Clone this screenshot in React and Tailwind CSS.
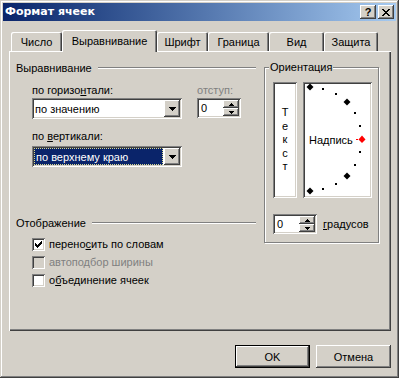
import React from 'react'

const raised =
  'shadow-[inset_-1px_-1px_0_#404040,inset_1px_1px_0_#ffffff,inset_-2px_-2px_0_#808080,inset_2px_2px_0_#d4d0c8]'
const sunken =
  'shadow-[inset_1px_1px_0_#808080,inset_-1px_-1px_0_#ffffff,inset_2px_2px_0_#404040,inset_-2px_-2px_0_#d4d0c8]'

const TABS = [
  { label: 'Число', w: 'w-[51px]' },
  { label: 'Выравнивание', w: 'w-[95px]', active: true },
  { label: 'Шрифт', w: 'w-[51px]' },
  { label: 'Граница', w: 'w-[61px]' },
  { label: 'Вид', w: 'w-[55px]' },
  { label: 'Защита', w: 'w-[54px]' },
]

function DownArrow() {
  return (
    <svg width="7" height="4" viewBox="0 0 7 4" shapeRendering="crispEdges">
      <path d="M0 0h7v1h-1v1h-1v1h-1v1h-1v-1h-1v-1h-1v-1h-1z" fill="#000" />
    </svg>
  )
}

function SmallArrow({ up }) {
  return (
    <svg width="5" height="3" viewBox="0 0 5 3" shapeRendering="crispEdges">
      <path
        d={up ? 'M2 0h1v1h1v1h1v1h-5v-1h1v-1h1z' : 'M0 0h5v1h-1v1h-1v1h-1v-1h-1v-1h-1z'}
        fill="#000"
      />
    </svg>
  )
}

function Combo({ value, focused }) {
  return (
    <div className={`flex h-[21px] w-[150px] items-center bg-white p-[2px] ${sunken}`}>
      <div className="flex h-full flex-1 items-center pr-[1px]">
        {focused ? (
          <span className="flex h-full w-full items-center border border-dotted border-[#d8d890] bg-[#0a246a] pl-[1px] text-white">
            {value}
          </span>
        ) : (
          <span className="pl-[1px]">{value}</span>
        )}
      </div>
      <div className={`flex h-[17px] w-[16px] items-center justify-center bg-[#d4d0c8] ${raised}`}>
        <DownArrow />
      </div>
    </div>
  )
}

function Spin({ w }) {
  return (
    <div className={`flex h-[20px] ${w} items-center bg-white p-[2px] ${sunken}`}>
      <span className="flex-1 pl-[2px]">0</span>
      <div className="flex h-full w-[16px] flex-col">
        <div className={`flex flex-1 items-center justify-center bg-[#d4d0c8] ${raised}`}>
          <SmallArrow up />
        </div>
        <div className={`flex flex-1 items-center justify-center bg-[#d4d0c8] ${raised}`}>
          <SmallArrow />
        </div>
      </div>
    </div>
  )
}

function Check({ checked, disabled, children }) {
  return (
    <div className="flex h-[18px] items-center gap-[4px]">
      <div
        className={`flex h-[13px] w-[13px] items-center justify-center ${disabled ? 'bg-[#d4d0c8]' : 'bg-white'} ${sunken}`}
      >
        {checked && (
          <svg width="7" height="7" viewBox="0 0 7 7" shapeRendering="crispEdges">
            <path d="M6 0h1v3h-1v1h-1v1h-1v1h-1v1h-1v-1h-1v-1h-1v-3h1v1h1v1h1v-1h1v-1h1v-1h1z" fill="#000" />
          </svg>
        )}
      </div>
      <span className={disabled ? 'text-[#808080]' : ''}>{children}</span>
    </div>
  )
}

function GroupHeader({ children }) {
  return (
    <div className="flex h-[14px] items-center gap-[6px]">
      <span>{children}</span>
      <div className="h-[2px] flex-1 border-t border-b border-t-[#808080] border-b-white" />
    </div>
  )
}

function Dial() {
  const marks = []
  for (let a = 90; a >= -90; a -= 15) {
    const r = (a * Math.PI) / 180
    const x = Math.round(7 + 52 * Math.cos(r))
    const y = Math.round(57 - 52 * Math.sin(r))
    if (a === 0) {
      marks.push(
        <g key={a}>
          <rect x={x - 6} y={y} width="2" height="1" fill="#ff0000" />
          <path d={`M${x} ${y - 3.5}L${x + 3.5} ${y + 0.5}L${x} ${y + 4}L${x - 3.5} ${y + 0.5}Z`} fill="#ff0000" />
        </g>
      )
    } else if (a % 45 === 0) {
      marks.push(
        <path key={a} d={`M${x} ${y - 3.5}L${x + 3.5} ${y}L${x} ${y + 3.5}L${x - 3.5} ${y}Z`} fill="#000" />
      )
    } else {
      marks.push(<rect key={a} x={x - 1} y={y - 1} width="2" height="2" fill="#000" />)
    }
  }
  return (
    <div className={`relative h-[116px] w-[69px] bg-white ${sunken}`}>
      <svg className="absolute inset-0" width="69" height="116" viewBox="0 0 69 116">
        {marks}
      </svg>
      <span className="absolute left-[6px] top-[51px]">Надпись</span>
    </div>
  )
}

export default function App() {
  return (
    <div className="h-[378px] w-[399px] bg-[#d4d0c8] font-['Liberation_Sans',Arial,sans-serif] text-[11px] leading-[14px] text-black shadow-[inset_-1px_-1px_0_#404040,inset_1px_1px_0_#d4d0c8,inset_-2px_-2px_0_#808080,inset_2px_2px_0_#ffffff] pt-[3px]">
      {/* title bar */}
      <div className="mx-[3px] flex h-[18px] items-center justify-between bg-linear-to-r from-[#0a246a] to-[#a6caf0] pl-[2px] pr-[2px]">
        <span className="font-['DejaVu_Sans',sans-serif] text-[11px] font-bold text-white">Формат ячеек</span>
        <div className="flex gap-[2px]">
          <div className={`flex h-[14px] w-[16px] items-center justify-center bg-[#d4d0c8] text-[11px] font-bold leading-none ${raised}`}>
            ?
          </div>
          <div className={`flex h-[14px] w-[16px] items-center justify-center bg-[#d4d0c8] ${raised}`}>
            <svg width="8" height="7" viewBox="0 0 8 7" shapeRendering="crispEdges">
              <path
                d="M0 0h2v1h1v1h2v-1h1v-1h2v1h-1v1h-1v1h-1v1h1v1h1v1h1v1h-2v-1h-1v-1h-2v1h-1v1h-2v-1h1v-1h1v-1h1v-1h-1v-1h-1v-1h-1z"
                fill="#000"
              />
            </svg>
          </div>
        </div>
      </div>

      {/* tabs */}
      <div className="mt-[9px] flex h-[21px] items-end pl-[11px]">
        {TABS.map((t) => (
          <div
            key={t.label}
            className={`${t.w} flex justify-center rounded-t-[2px] bg-[#d4d0c8] shadow-[inset_1px_1px_0_#ffffff,inset_-1px_0_0_#404040,inset_-2px_0_0_#808080] ${
              t.active ? 'relative z-10 -mb-px h-[22px] pt-[4px]' : 'h-[19px] pt-[3px]'
            }`}
          >
            {t.label}
          </div>
        ))}
      </div>

      {/* panel */}
      <div className="ml-[9px] flex h-[280px] w-[382px] items-start pl-[7px] pt-[10px] shadow-[inset_1px_1px_0_#ffffff,inset_-1px_-1px_0_#404040,inset_-2px_-2px_0_#808080]">
        <div className="flex w-[240px] flex-col">
          <GroupHeader>Выравнивание</GroupHeader>
          <div className="mt-[8px] flex pl-[16px]">
            <div className="flex flex-col">
              <span>
                по горизо<u>н</u>тали:
              </span>
              <div className="mt-[1px]">
                <Combo value="по значению" />
              </div>
              <span className="mt-[10px]">
                по <u>в</u>ертикали:
              </span>
              <div className="mt-[3px]">
                <Combo value="по верхнему краю" focused />
              </div>
            </div>
            <div className="ml-[15px] flex flex-col">
              <span className="text-[#808080]">отступ:</span>
              <div className="mt-[1px]">
                <Spin w="w-[44px]" />
              </div>
            </div>
          </div>

          <div className="mt-[49px]">
            <GroupHeader>Отображение</GroupHeader>
          </div>
          <div className="mt-[5px] flex flex-col pl-[16px]">
            <Check checked>
              перено<u>с</u>ить по словам
            </Check>
            <Check disabled>автоподбор ширины</Check>
            <Check>
              о<u>б</u>ъединение ячеек
            </Check>
          </div>
        </div>

        <div className="ml-[8px] mt-[6px]">
          <div className="relative h-[176px] w-[115px] border border-[#808080] pl-[8px] pt-[14px] shadow-[inset_1px_1px_0_#ffffff,1px_1px_0_#ffffff]">
            <span className="absolute -top-[8px] left-[4px] bg-[#d4d0c8] px-[1px]">Ориентация</span>
            <div className="flex gap-[6px]">
              <div className={`flex h-[116px] w-[24px] flex-col items-center justify-center bg-white leading-[13.5px] ${sunken}`}>
                <span>Т</span>
                <span>е</span>
                <span>к</span>
                <span>с</span>
                <span>т</span>
              </div>
              <Dial />
            </div>
            <div className="mt-[16px] flex items-center gap-[6px]">
              <Spin w="w-[44px]" />
              <span>
                <u>г</u>радусов
              </span>
            </div>
          </div>
        </div>
      </div>

      {/* buttons */}
      <div className="mt-[14px] flex justify-end gap-[6px] pr-[8px]">
        <div className="h-[23px] w-[75px] border border-black">
          <div className={`flex h-full w-full items-center justify-center ${raised}`}>OK</div>
        </div>
        <div className={`flex h-[23px] w-[75px] items-center justify-center ${raised}`}>Отмена</div>
      </div>
    </div>
  )
}
